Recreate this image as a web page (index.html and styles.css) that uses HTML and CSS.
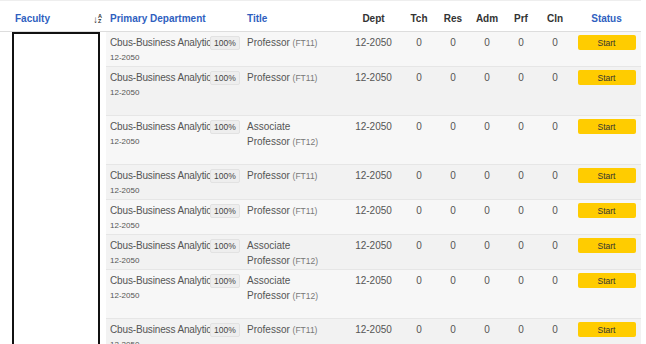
FILE: index.html
```html
<!DOCTYPE html>
<html>
<head>
<meta charset="utf-8">
<link rel="stylesheet" href="styles.css">
</head>
<body>
<table class="grid">
  <colgroup>
    <col class="c-fac"><col class="c-dep"><col class="c-title"><col class="c-dept"><col class="c-n"><col class="c-n"><col class="c-n"><col class="c-n"><col class="c-n"><col class="c-status">
  </colgroup>
  <thead>
    <tr>
      <th class="h-fac link"><span>Faculty</span>
        <span class="sort"><span class="arr">↓</span><span class="az"><i>A</i><i>Z</i></span></span>
      </th>
      <th class="link left">Primary Department</th>
      <th class="link left">Title</th>
      <th>Dept</th><th>Tch</th><th>Res</th><th>Adm</th><th>Prf</th><th>Cln</th>
      <th class="link">Status</th>
    </tr>
  </thead>
  <tbody>
    <tr class="odd">
      <td class="fac" rowspan="8"><div class="photo"></div></td>
      <td class="dep"><div class="dep-line"><span class="dname">Cbus-Business Analytics</span><span class="pct">100%</span></div><div class="sub">12-2050</div></td>
      <td class="title">Professor <small>(FT11)</small></td>
      <td class="num">12-2050</td><td class="num">0</td><td class="num">0</td><td class="num">0</td><td class="num">0</td><td class="num">0</td>
      <td class="status"><button class="start">Start</button></td>
    </tr>
    <tr class="even tall">
      <td class="dep"><div class="dep-line"><span class="dname">Cbus-Business Analytics</span><span class="pct">100%</span></div><div class="sub">12-2050</div></td>
      <td class="title">Professor <small>(FT11)</small></td>
      <td class="num">12-2050</td><td class="num">0</td><td class="num">0</td><td class="num">0</td><td class="num">0</td><td class="num">0</td>
      <td class="status"><button class="start">Start</button></td>
    </tr>
    <tr class="odd tall">
      <td class="dep"><div class="dep-line"><span class="dname">Cbus-Business Analytics</span><span class="pct">100%</span></div><div class="sub">12-2050</div></td>
      <td class="title">Associate<br>Professor <small>(FT12)</small></td>
      <td class="num">12-2050</td><td class="num">0</td><td class="num">0</td><td class="num">0</td><td class="num">0</td><td class="num">0</td>
      <td class="status"><button class="start">Start</button></td>
    </tr>
    <tr class="even">
      <td class="dep"><div class="dep-line"><span class="dname">Cbus-Business Analytics</span><span class="pct">100%</span></div><div class="sub">12-2050</div></td>
      <td class="title">Professor <small>(FT11)</small></td>
      <td class="num">12-2050</td><td class="num">0</td><td class="num">0</td><td class="num">0</td><td class="num">0</td><td class="num">0</td>
      <td class="status"><button class="start">Start</button></td>
    </tr>
    <tr class="odd">
      <td class="dep"><div class="dep-line"><span class="dname">Cbus-Business Analytics</span><span class="pct">100%</span></div><div class="sub">12-2050</div></td>
      <td class="title">Professor <small>(FT11)</small></td>
      <td class="num">12-2050</td><td class="num">0</td><td class="num">0</td><td class="num">0</td><td class="num">0</td><td class="num">0</td>
      <td class="status"><button class="start">Start</button></td>
    </tr>
    <tr class="even">
      <td class="dep"><div class="dep-line"><span class="dname">Cbus-Business Analytics</span><span class="pct">100%</span></div><div class="sub">12-2050</div></td>
      <td class="title">Associate<br>Professor <small>(FT12)</small></td>
      <td class="num">12-2050</td><td class="num">0</td><td class="num">0</td><td class="num">0</td><td class="num">0</td><td class="num">0</td>
      <td class="status"><button class="start">Start</button></td>
    </tr>
    <tr class="odd tall">
      <td class="dep"><div class="dep-line"><span class="dname">Cbus-Business Analytics</span><span class="pct">100%</span></div><div class="sub">12-2050</div></td>
      <td class="title">Associate<br>Professor <small>(FT12)</small></td>
      <td class="num">12-2050</td><td class="num">0</td><td class="num">0</td><td class="num">0</td><td class="num">0</td><td class="num">0</td>
      <td class="status"><button class="start">Start</button></td>
    </tr>
    <tr class="even">
      <td class="dep"><div class="dep-line"><span class="dname">Cbus-Business Analytics</span><span class="pct">100%</span></div><div class="sub">12-2050</div></td>
      <td class="title">Professor <small>(FT11)</small></td>
      <td class="num">12-2050</td><td class="num">0</td><td class="num">0</td><td class="num">0</td><td class="num">0</td><td class="num">0</td>
      <td class="status"><button class="start">Start</button></td>
    </tr>
  </tbody>
</table>
</body>
</html>
```

FILE: styles.css
```css
html, body {
  margin: 0;
  padding: 0;
  background: #ffffff;
  overflow: hidden;
}
body {
  font-family: "Liberation Sans", Arial, sans-serif;
  font-size: 10px;
  color: #555555;
}
.grid {
  border-collapse: collapse;
  table-layout: fixed;
  width: 641px;
  border-top: 1px solid #eeeeee;
}
.c-fac { width: 106px; }
.c-dep { width: 137px; }
.c-title { width: 102px; }
.c-dept { width: 57px; }
.c-n { width: 34px; }
.c-status { width: 69px; }

thead tr { height: 31px; }
th {
  font-size: 10px;
  font-weight: bold;
  color: #333333;
  text-align: center;
  line-height: 14px;
  padding: 11px 4px 0;
  border-bottom: 1px solid #dddddd;
  white-space: nowrap;
  vertical-align: top;
}
th.left { text-align: left; }
th.link { color: #2f5fbf; }
th.h-fac {
  text-align: left;
  padding-left: 15px;
  position: relative;
}
.sort {
  position: absolute;
  left: 93px;
  top: 13px;
  display: flex;
  align-items: flex-start;
  color: #333333;
}
.arr {
  font-size: 10px;
  line-height: 11px;
  font-weight: bold;
}
.az {
  display: flex;
  flex-direction: column;
  font-size: 5.5px;
  line-height: 5px;
  font-weight: bold;
}
.az i { font-style: normal; }

td {
  padding: 3px 4px 0;
  vertical-align: top;
  line-height: 15px;
  border-bottom: 1px solid #e6e6e6;
}
tbody tr { height: 35px; }
tbody tr.tall { height: 49px; }
tr.odd td { background: #f7f7f7; }
tr.even td { background: #f2f2f2; }
tr td.fac {
  background: #ffffff;
  border-bottom: none;
  padding: 0 6px 0 12px;
}
.photo {
  width: 84px;
  height: 320px;
  border: 2px solid #111111;
  border-bottom: none;
  background: #ffffff;
}
.dep-line {
  display: flex;
  align-items: center;
  height: 15px;
}
.dname {
  display: block;
  width: 100px;
  flex: none;
  overflow: hidden;
  white-space: nowrap;
  letter-spacing: -0.15px;
}
.pct {
  font-size: 8.5px;
  line-height: 12px;
  padding: 0 3px;
  background: #eeeeee;
  border: 1px solid #e2e2e2;
  border-radius: 2px;
  color: #444444;
}
.sub {
  font-size: 8px;
  line-height: 15px;
}
.title small {
  font-size: 8.5px;
  line-height: 10px;
  color: #777777;
}
td.num {
  text-align: center;
}
td.status {
  text-align: center;
  padding-top: 3px;
}
.start {
  display: block;
  margin: 0 auto;
  width: 58px;
  height: 15px;
  border: none;
  border-radius: 2px;
  background: #ffcc00;
  color: #333333;
  font-family: "Liberation Sans", Arial, sans-serif;
  font-size: 8.5px;
  padding: 0;
  cursor: pointer;
}
```
